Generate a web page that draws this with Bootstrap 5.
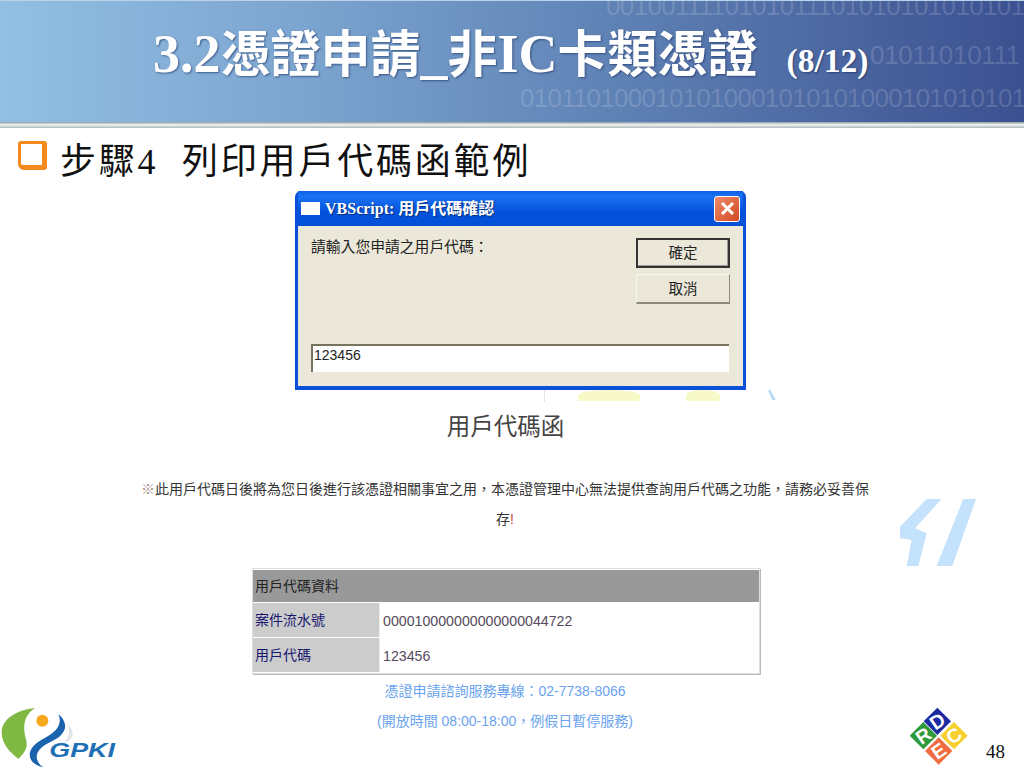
<!DOCTYPE html>
<html lang="zh-Hant">
<head>
<meta charset="utf-8">
<title>3.2憑證申請_非IC卡類憑證</title>
<link rel="stylesheet" href="https://cdn.jsdelivr.net/npm/bootstrap@5.3.0/dist/css/bootstrap.min.css">
<style>
html,body{margin:0;background:#fff;}
body{font-family:"Liberation Sans","Noto Sans CJK TC",sans-serif;color:#222;}
.slide-frame{width:1024px;height:768px;position:relative;overflow:hidden;background:#fff;}
.slide-head{height:122px;position:relative;overflow:hidden;background:linear-gradient(90deg,#93bfe3 0%,#7ba4cf 30%,#5f82b5 60%,#3b5090 100%);border-top:1px solid #b9d3e8;}
.bin-line{position:absolute;white-space:nowrap;font-size:26px;line-height:26px;color:rgba(255,255,255,.16);font-family:"Liberation Sans",sans-serif;}
.bin-a{top:-8px;left:606px;letter-spacing:-.65px;}
.bin-b{top:41px;left:870px;letter-spacing:-.3px;}
.bin-c{top:84px;left:520px;letter-spacing:-.75px;}
.slide-title{position:relative;padding:24px 0 0 153px;color:#fff;font-family:"Liberation Serif","Noto Sans CJK TC",serif;font-weight:700;font-size:50px;line-height:58px;white-space:nowrap;text-shadow:1px 1px 2px rgba(20,40,90,.6);}
.title-latin{font-size:54px;}
.title-count{font-size:33.5px;margin-left:29px;}
.head-rule{height:6px;background:linear-gradient(180deg,#8b9a9d 0%,#f2f5f4 45%,#aeb9b9 100%);}
.step-row{height:63px;padding:13px 0 0 18px;}
.step-box{width:29px;height:29px;border:3px solid #f58a1f;border-right-width:5px;border-bottom-width:5px;border-radius:3px 3px 3px 6px;background:#fff;margin-top:0;}
.step-text{margin-left:13px;font-family:"Liberation Serif","Noto Sans CJK TC",serif;font-size:36px;line-height:42px;letter-spacing:2.8px;color:#111;white-space:pre;}
.xp-dialog{width:451px;height:199px;margin-left:295px;background:#0a50d8;border-radius:6px 6px 0 0;padding:0 3px 4px;font-family:"Noto Sans CJK TC",sans-serif;}
.xp-bar{height:35px;background:linear-gradient(180deg,#0a60e8 0%,#1a72f2 15%,#0452dc 60%,#0350d8 100%);color:#fff;font-weight:700;font-size:16px;padding:0 3px 0 3px;font-family:"Liberation Serif","Noto Sans CJK TC",serif;text-shadow:1px 1px 1px #0a2f80;}
.xp-icon{width:19px;height:13px;background:#fff;margin-right:5px;}
.xp-close{width:26px;height:26px;border-radius:3px;background:linear-gradient(135deg,#ee8a6a,#d24a22);border:1px solid #fff;}
.xp-body{height:160px;background:#ebe8da;padding:12px 13px 0;font-size:14.8px;color:#222;}
.xp-prompt{line-height:16px;}
.xp-btn{width:94px;height:30px;background:#ebe8da;border:1px solid #f8f7f0;border-right-color:#8d8a78;border-bottom:2px solid #8d8a78;font-size:14.5px;line-height:25px;text-align:center;}
.xp-default{border:2px solid #333;box-shadow:inset -1px -1px 0 #999;line-height:23px;}
.xp-actions{gap:6px;}
.xp-field{height:28px;background:#fff;border-top:2px solid #77735f;border-left:2px solid #77735f;font-family:"Liberation Sans",sans-serif;font-size:14px;line-height:18px;padding-left:1px;margin-top:40px;width:418px;}
.deco-strip{height:12px;position:relative;}
.deco-yellow{position:absolute;top:0;height:11px;background:#f7f9c8;border-radius:50% 50% 0 0;}
.deco-tick{position:absolute;top:0;left:544px;width:1px;height:12px;background:#e4e6e8;}
.deco-blue{position:absolute;top:0;left:768px;width:8px;height:10px;background:#bcdcf6;clip-path:polygon(0 0,30% 0,100% 100%,50% 100%);}
.doc-title{height:72px;text-align:center;font-size:23.5px;line-height:50px;color:#444;margin-left:-13px;}
.doc-note{width:740px;margin-left:135px;text-align:center;font-size:14px;line-height:30px;color:#333;white-space:nowrap;}
.note-mark{color:#a08a80;}
.note-bang{color:#c44;}
.doc-table{width:508px;margin:34px 0 0 252px;border:1px solid #ddd;border-collapse:separate;border-spacing:0 1px;font-size:14px;background:#fff;box-shadow:1px 1px 0 #bbb;}
.doc-table th{background:#999;height:32px;font-weight:400;padding:0 2px;color:#222;}
.doc-table td{height:34px;padding:0 2px;}
.doc-table .lbl{width:127px;background:#ccc;color:#16166e;border-right:1px solid #eee;}
.doc-table .val{color:#554a5c;padding:4px 0 0 3px;font-size:14.2px;}
.contact{text-align:center;color:#6aa3ee;font-size:14px;line-height:30px;margin:2px 0 0 -14px;}
.logo-gpki{position:absolute;left:0;top:704px;}
.logo-rdec{position:absolute;left:905px;top:704px;}
.deco-bolt{position:absolute;left:895px;top:490px;}
.page-no{position:absolute;left:986px;top:741px;font-family:"Liberation Serif",serif;font-size:19px;line-height:22px;color:#111;}
</style>
</head>
<body>
<div class="slide-frame">
  <header class="slide-head">
    <div class="bin-line bin-a">0010011110101011101010101010101</div>
    <div class="bin-line bin-b">01011010111</div>
    <div class="bin-line bin-c">0101101000101010001010101000101010101</div>
    <h1 class="slide-title m-0"><span class="title-latin">3.2</span>憑證申請<span class="title-latin">_</span>非<span class="title-latin">IC</span>卡類憑證<span class="title-count">(8/12)</span></h1>
  </header>
  <div class="head-rule"></div>
  <div class="step-row d-flex align-items-start">
    <div class="step-box"></div>
    <div class="step-text">步驟4  列印用戶代碼函範例</div>
  </div>
  <div class="xp-dialog">
    <div class="xp-bar d-flex align-items-center">
      <span class="xp-icon"></span>
      <span class="flex-grow-1">VBScript: 用戶代碼確認</span>
      <span class="xp-close d-flex align-items-center justify-content-center">
        <svg width="15" height="15" viewBox="0 0 15 15"><path d="M2 2L13 13M13 2L2 13" stroke="#fff" stroke-width="3"/></svg>
      </span>
    </div>
    <div class="xp-body">
      <div class="d-flex justify-content-between">
        <div class="xp-prompt">請輸入您申請之用戶代碼：</div>
        <div class="d-flex flex-column xp-actions">
          <div class="xp-btn xp-default">確定</div>
          <div class="xp-btn">取消</div>
        </div>
      </div>
      <div class="xp-field">123456</div>
    </div>
  </div>
  <div class="deco-strip">
    <span class="deco-tick"></span>
    <span class="deco-yellow" style="left:578px;width:62px"></span>
    <span class="deco-yellow" style="left:686px;width:34px"></span>
    <span class="deco-blue"></span>
  </div>
  <div class="doc-title">用戶代碼函</div>
  <div class="doc-note"><span class="note-mark">※</span>此用戶代碼日後將為您日後進行該憑證相關事宜之用，本憑證管理中心無法提供查詢用戶代碼之功能，請務必妥善保<br>存<span class="note-bang">!</span></div>
  <table class="doc-table">
    <tr><th colspan="2">用戶代碼資料</th></tr>
    <tr><td class="lbl">案件流水號</td><td class="val">000010000000000000044722</td></tr>
    <tr><td class="lbl">用戶代碼</td><td class="val">123456</td></tr>
  </table>
  <div class="contact">憑證申請諮詢服務專線：02-7738-8066<br>(開放時間 08:00-18:00，例假日暫停服務)</div>

  <svg class="deco-bolt" width="90" height="85" viewBox="0 0 270 255"><path d="M95 27H140L60 115L95 130L70 228H35L50 150L15 145V110Z" fill="#c4e2fb"/><path d="M205 27H243L172 228H125Z" fill="#c4e2fb"/></svg>

  <svg class="logo-gpki" width="120" height="64" viewBox="0 0 360 192">
    <path d="M105 12C50 18 5 45 5 85C5 120 30 145 55 165C75 145 85 130 78 105C68 70 70 35 105 12Z" fill="#7fb843"/>
    <circle cx="127" cy="50" r="18" fill="#f5a81e"/>
    <path d="M200 60C222 75 225 95 205 112L190 116C210 100 212 80 200 60Z" fill="#dfe4ea"/>
    <path d="M175 30C198 50 205 75 178 98C155 115 122 122 112 148C106 165 115 180 130 190C105 185 85 170 90 145C95 120 130 105 150 92C175 77 186 55 175 30Z" fill="#1a63ad"/>
    <text x="148" y="160" font-family="Liberation Sans,sans-serif" font-size="62" font-weight="700" font-style="italic" textLength="197" lengthAdjust="spacingAndGlyphs" fill="#1f6fb5">GPKI</text>
  </svg>

  <svg class="logo-rdec" width="68" height="64" viewBox="0 0 204 192">
    <g font-family="Liberation Sans,sans-serif" font-weight="700" font-size="58" text-anchor="middle" fill="#fff">
      <g transform="translate(97 52)"><rect x="-29" y="-29" width="58" height="58" transform="rotate(45)" fill="#1e2aa0"/><text y="20" transform="rotate(-35)">D</text></g>
      <g transform="translate(55 95)"><rect x="-29" y="-29" width="58" height="58" transform="rotate(45)" fill="#2f9a3c"/><text y="20" transform="rotate(-35)">R</text></g>
      <g transform="translate(147 95)"><rect x="-29" y="-29" width="58" height="58" transform="rotate(45)" fill="#f6d02e"/><text y="20" transform="rotate(-35)">C</text></g>
      <g transform="translate(101 141)"><rect x="-29" y="-29" width="58" height="58" transform="rotate(45)" fill="#ef6c40"/><text y="20" transform="rotate(-35)">E</text></g>
    </g>
  </svg>
  <div class="page-no">48</div>
</div>
<script src="https://cdn.jsdelivr.net/npm/bootstrap@5.3.0/dist/js/bootstrap.bundle.min.js"></script>
</body>
</html>
